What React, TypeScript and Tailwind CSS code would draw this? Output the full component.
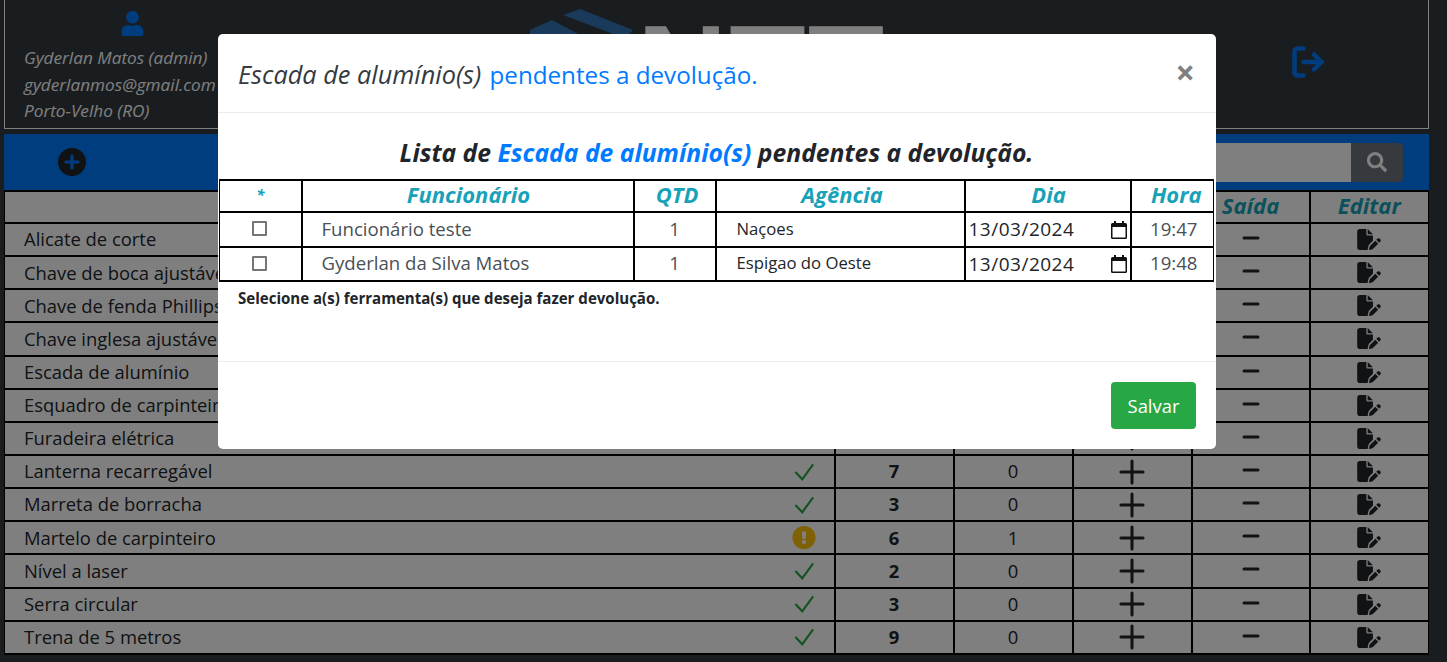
import { LogOut, Minus, Plus } from "lucide-react";
import { FaExclamationCircle, FaSearch, FaUser } from "react-icons/fa";
import { FaFilePen } from "react-icons/fa6";

type Ferramenta = { nome: string; status: "ok" | "alerta"; qtd: number; saida: number };

const ferramentas: Ferramenta[] = [
  { nome: "Alicate de corte", status: "ok", qtd: 5, saida: 0 },
  { nome: "Chave de boca ajustável", status: "ok", qtd: 4, saida: 0 },
  { nome: "Chave de fenda Phillips", status: "ok", qtd: 8, saida: 0 },
  { nome: "Chave inglesa ajustável", status: "ok", qtd: 3, saida: 0 },
  { nome: "Escada de alumínio", status: "alerta", qtd: 2, saida: 2 },
  { nome: "Esquadro de carpinteiro", status: "ok", qtd: 4, saida: 0 },
  { nome: "Furadeira elétrica", status: "ok", qtd: 2, saida: 0 },
  { nome: "Lanterna recarregável", status: "ok", qtd: 7, saida: 0 },
  { nome: "Marreta de borracha", status: "ok", qtd: 3, saida: 0 },
  { nome: "Martelo de carpinteiro", status: "alerta", qtd: 6, saida: 1 },
  { nome: "Nível a laser", status: "ok", qtd: 2, saida: 0 },
  { nome: "Serra circular", status: "ok", qtd: 3, saida: 0 },
  { nome: "Trena de 5 metros", status: "ok", qtd: 9, saida: 0 },
];

const pendentes = [
  { funcionario: "Funcionário teste", qtd: 1, agencia: "Naçoes", dia: "13/03/2024", hora: "19:47" },
  { funcionario: "Gyderlan da Silva Matos", qtd: 1, agencia: "Espigao do Oeste", dia: "13/03/2024", hora: "19:48" },
];

const cell = "border-2 border-black p-0 first:border-l last:border-r";
const thBase = "border-2 border-black p-0 pb-[4px] text-center leading-none font-bold italic text-[#17a2b8] first:border-l last:border-r";
const th = `${thBase} text-[22px]`;

function Calendario() {
  return (
    <svg width="16" height="18" viewBox="0 0 16 18" className="text-[#111]">
      <path d="M3 0h2v2h6V0h2v2h1.500A1.500 1.500 0 0 1 16 3.500v13a1.500 1.500 0 0 1-1.500 1.500h-13A1.500 1.500 0 0 1 0 16.500v-13A1.500 1.500 0 0 1 1.500 2H3zM1.500 6v10.500h13V6z" fill="currentColor" />
    </svg>
  );
}

function Cabecalho() {
  return (
    <header className="flex h-[129px] overflow-hidden border border-t-0 border-white text-white">
      <div className="w-[236px] shrink-0 pl-[19px] pt-[11px]">
        <div className="flex justify-center">
          <FaUser className="h-[25px] w-[25px] text-[#007bff]" />
        </div>
        <div className="mt-[9px] whitespace-nowrap text-[17.200px] italic leading-[26.500px]">
          <p>Gyderlan Matos (admin)</p>
          <p>gyderlanmos@gmail.com</p>
          <p>Porto-Velho (RO)</p>
        </div>
      </div>
      <div className="flex flex-1 items-start pl-[287px] pt-[8px]">
        <svg width="106" height="60" viewBox="0 0 106 60">
          <polygon points="35,7 52,1 105,22 100,27 88,27" fill="#3474b8" />
          <polygon points="2,22 24,12 52,27 2,27" fill="#3474b8" />
        </svg>
        <span className="-mt-[2px] ml-[3px] text-[125px] font-bold leading-none tracking-[2px] [font-family:'Liberation_Sans',sans-serif]">NTT</span>
      </div>
      <div className="flex w-[240px] shrink-0 items-center justify-center pb-[4px]">
        <LogOut className="h-[36px] w-[36px] text-[#007bff]" strokeWidth={3} />
      </div>
    </header>
  );
}

function Tabela() {
  return (
    <table className="h-[465px] w-full table-fixed border-collapse bg-white text-[18.400px] leading-none text-[#212529]">
      <colgroup>
        <col />
        <col className="w-[119px]" />
        <col className="w-[119px]" />
        <col className="w-[119px]" />
        <col className="w-[118px]" />
        <col className="w-[119px]" />
      </colgroup>
      <thead>
        <tr className="h-[32px]">
          <th className={th}></th>
          <th className={th}>Total</th>
          <th className={th}>Uso</th>
          <th className={th}>Entrada</th>
          <th className={th}>Saída</th>
          <th className={th}>Editar</th>
        </tr>
      </thead>
      <tbody>
        {ferramentas.map((f) => (
          <tr key={f.nome} className="h-[33px]">
            <td className={cell}>
              <div className="flex items-center justify-between pl-[19px] pr-[18px]">
                <span>{f.nome}</span>
                {f.status === "ok" ? (
                  <svg width="23" height="20" viewBox="0 0 24 22" className="-my-1" fill="none">
                    <path d="M2 11l7.500 8L21.500 2.500" stroke="#28a745" strokeWidth="2.400" />
                  </svg>
                ) : (
                  <FaExclamationCircle className="h-[25px] w-[24px] text-[#ffc107]" />
                )}
              </div>
            </td>
            <td className={`${cell} text-center font-bold`}>{f.qtd}</td>
            <td className={`${cell} text-center`}>{f.saida}</td>
            <td className={cell}>
              <Plus className="mx-auto -my-2 h-[38px] w-[38px] text-[#212529]" strokeWidth={1.900} />
            </td>
            <td className={cell}>
              <Minus className="mx-auto -mt-[3px] h-[24px] w-[24px] text-[#212529]" strokeWidth={3} />
            </td>
            <td className={cell}>
              <FaFilePen className="mx-auto h-[21px] w-[24px] text-[#212529]" />
            </td>
          </tr>
        ))}
      </tbody>
    </table>
  );
}

function Modal() {
  return (
    <div className="fixed inset-0 bg-black/50">
      <div className="ml-[218px] mt-[34px] w-[998px] rounded-[5px] bg-white">
        <div className="flex h-[79px] items-center justify-between border-b border-[#e9ecef] pl-5 pr-[21px]">
          <h5 className="mt-[3px] text-[24.200px] text-[#007bff]">
            <i className="mr-[2px] text-[25.300px] text-[#343a40]">Escada de alumínio(s)</i> pendentes a devolução.
          </h5>
          <span className="mb-[3px] text-[34px] font-bold leading-none text-[#808080]">×</span>
        </div>
        <div className="h-[248px] pl-px pr-[2px] pt-[23px]">
          <h4 className="text-center text-[24.700px] font-bold italic leading-[33px] text-[#212529]">
            Lista de <span className="text-[#007bff]">Escada de alumínio(s)</span> pendentes a devolução.
          </h4>
          <table className="mt-[10px] w-full table-fixed border-collapse border border-black text-[18.600px] leading-none text-[#495057]">
            <colgroup>
              <col className="w-[82px]" />
              <col className="w-[332px]" />
              <col className="w-[82px]" />
              <col className="w-[249px]" />
              <col className="w-[166px]" />
              <col />
            </colgroup>
            <thead>
              <tr className="h-[32px]">
                <th className={`${thBase} text-[15px]`}>*</th>
                <th className={`${th} pl-[2px]`}>Funcionário</th>
                <th className={`${th} pl-[5px]`}>QTD</th>
                <th className={`${th} pl-[4px]`}>Agência</th>
                <th className={`${th} pl-[2px]`}>Dia</th>
                <th className={`${th} pl-[8px]`}>Hora</th>
              </tr>
            </thead>
            <tbody>
              {pendentes.map((p) => (
                <tr key={p.hora} className="h-[34.500px]">
                  <td className={`${cell} text-center`}>
                    <input type="checkbox" className="mb-[3px] mr-[2px] h-[15px] w-[15px] appearance-none rounded-[1px] border-2 border-[#767676] align-middle" />
                  </td>
                  <td className={`${cell} pl-[19px]`}>{p.funcionario}</td>
                  <td className={`${cell} text-center`}>{p.qtd}</td>
                  <td className={`${cell} pl-[20px] text-[16.700px] text-[#212529]`}>{p.agencia}</td>
                  <td className={cell}>
                    <div className="flex items-center justify-between pl-[3px] pr-[3px] pt-px text-[19px] tracking-[0.500px] text-[#212529]">
                      <span>{p.dia}</span>
                      <Calendario />
                    </div>
                  </td>
                  <td className={`${cell} pl-[3px] text-center`}>{p.hora}</td>
                </tr>
              ))}
            </tbody>
          </table>
          <p className="ml-[19px] mt-[6px] text-[15.050px] font-bold leading-[21px] text-[#212529]">
            Selecione a(s) ferramenta(s) que deseja fazer devolução.
          </p>
        </div>
        <div className="flex justify-end border-t border-[#e9ecef] p-5">
          <button type="button" className="h-[47px] w-[85px] rounded-[4px] bg-[#28a745] text-[18.400px] text-white">
            Salvar
          </button>
        </div>
      </div>
    </div>
  );
}

export default function App() {
  return (
    <div className="min-h-screen bg-[#343a40] pl-1 pr-[18px] [font-family:'Open_Sans',sans-serif]">
      <Cabecalho />
      <div className="mt-[5px] flex h-[56px] items-center justify-between bg-[#007bff] pl-[54px] pr-[26px]">
        <svg width="28" height="28" viewBox="0 0 28 28">
          <circle cx="14" cy="14" r="14" fill="#212529" />
          <path d="M14 8v12M8 14h12" stroke="#007bff" strokeWidth="3.200" strokeLinecap="round" />
        </svg>
        <div className="flex h-[39px] w-[600px] overflow-hidden rounded-[4px]">
          <div className="flex-1 bg-white"></div>
          <div className="flex w-[52px] items-center justify-center bg-[#6c757d]">
            <FaSearch className="h-[20px] w-[20px] text-white" />
          </div>
        </div>
      </div>
      <Tabela />
      <Modal />
    </div>
  );
}
